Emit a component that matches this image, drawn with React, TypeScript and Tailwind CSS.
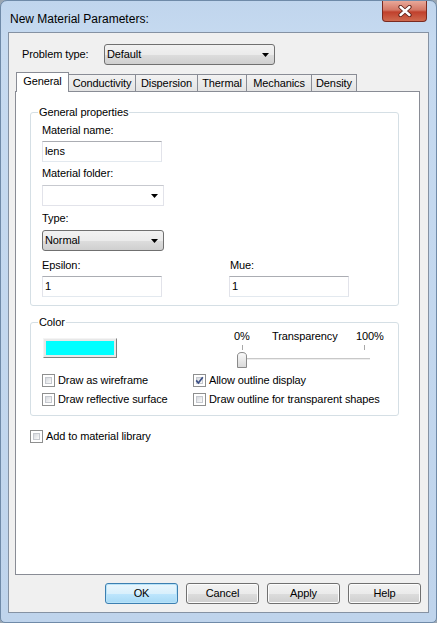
import React from "react";

// Win7 style "New Material Parameters" dialog

const font = "font-['Liberation_Sans',Arial,sans-serif]";

function Arrow() {
  return (
    <svg width="7" height="4" viewBox="0 0 7 4">
      <path d="M0 0h7L3.5 4z" fill="#000" />
    </svg>
  );
}

function Combo({ value, className }: { value: string; className: string }) {
  return (
    <div
      className={`flex h-[21px] items-center justify-between rounded-[3px] border border-[#707070] bg-[linear-gradient(#f2f2f2_0%,#ebebeb_50%,#dddddd_51%,#cfcfcf_100%)] pl-[2px] pr-[5px] ${className}`}
    >
      <span>{value}</span>
      <Arrow />
    </div>
  );
}

function TextBox({ value, className }: { value: string; className: string }) {
  return (
    <div
      className={`flex h-[21px] items-center border border-x-[#e2e3ea] border-t-[#abadb3] border-b-[#e3e9ef] bg-white pl-[2px] ${className}`}
    >
      {value}
    </div>
  );
}

function Check({ checked = false }: { checked?: boolean }) {
  return (
    <span className="relative flex h-[13px] w-[13px] shrink-0 border border-[#8e8f8f] bg-white p-[2px]">
      <span className="h-full w-full border border-[#c6c9cf] bg-[linear-gradient(135deg,#d6d9de,#fbfbfb)]" />
      {checked && (
        <svg className="absolute left-0 top-0" width="11" height="11" viewBox="0 0 11 11">
          <path d="M2.2 5.4 L4.4 8 L8.8 2.2" fill="none" stroke="#3b4f86" strokeWidth="1.7" />
        </svg>
      )}
    </span>
  );
}

function CheckRow({ label, checked }: { label: string; checked?: boolean }) {
  return (
    <div className="flex h-[13px] items-center gap-[3px]">
      <Check checked={checked} />
      <span className="leading-[13px]">{label}</span>
    </div>
  );
}

function Button({ label, primary }: { label: string; primary?: boolean }) {
  return (
    <div
      className={
        primary
          ? "flex h-[21px] w-[73px] items-center justify-center rounded-[3px] border border-[#3c7fb1] bg-[linear-gradient(#eaf6fd_0%,#d9f0fc_50%,#bee6fd_51%,#a7d9f5_100%)] shadow-[inset_0_0_0_1px_#b9e3f8]"
          : "flex h-[21px] w-[73px] items-center justify-center rounded-[3px] border border-[#707070] bg-[linear-gradient(#f2f2f2_0%,#ebebeb_50%,#dddddd_51%,#cfcfcf_100%)] shadow-[inset_0_0_0_1px_#fcfcfc]"
      }
    >
      {label}
    </div>
  );
}

const tabs = [
  { label: "Conductivity", w: "w-[68px]" },
  { label: "Dispersion", w: "w-[63px]" },
  { label: "Thermal", w: "w-[50px]" },
  { label: "Mechanics", w: "w-[66px]" },
  { label: "Density", w: "w-[46px]" },
];

export default function App() {
  return (
    <div className={`h-[623px] w-[437px] bg-[#9aa6b2] text-[11px] tracking-[-0.1px] text-black ${font}`}>
      <div className="flex h-[623px] w-[437px] flex-col rounded-t-[7px] rounded-b-[5px] border border-[#6f8aa8] bg-[linear-gradient(180deg,#c0d5ed_0%,#c6daf0_6%,#bfd4ec_100%)]">
        {/* title bar */}
        <div className="flex h-[31px] items-start justify-between">
          <span className="ml-[9px] mt-[11px] text-[12px] leading-[15px] tracking-normal">New Material Parameters:</span>
          <div className="mr-[9px] flex h-[21px] w-[45px] items-center justify-center rounded-b-[4px] border border-t-0 border-[#7a2a20] bg-[linear-gradient(#e9a899_0%,#d47866_45%,#c0402c_55%,#cf6a4f_100%)]">
            <svg width="16" height="12" viewBox="0 0 16 12">
              <path d="M3.5 2 L12.5 10 M12.5 2 L3.5 10" stroke="#5b2118" strokeWidth="4.2" strokeLinecap="round" />
              <path d="M3.5 2 L12.5 10 M12.5 2 L3.5 10" stroke="#fff" strokeWidth="2.4" strokeLinecap="round" />
            </svg>
          </div>
        </div>

        {/* client area */}
        <div className="mx-[7px] flex h-[581px] flex-col border border-[#8592a3] bg-[#f0f0f0]">
          <div className="mt-[11px] flex h-[21px] items-center">
            <span className="w-[95px] pl-[13px]">Problem type:</span>
            <Combo value="Default" className="w-[171px]" />
          </div>

          {/* tabs */}
          <div className="relative z-10 ml-[7px] mt-[7px] flex h-[19px] items-end">
            <div className="-mb-px flex h-[20px] w-[53px] items-center justify-center border-x border-t border-[#898c95] bg-white pb-[2px]">
              General
            </div>
            {tabs.map((t) => (
              <div
                key={t.label}
                className={`-ml-px flex h-[17px] ${t.w} items-center justify-center border-x border-t border-[#898c95] bg-[linear-gradient(#f2f2f2,#e3e3e3)]`}
              >
                {t.label}
              </div>
            ))}
          </div>

          {/* tab panel */}
          <div className="ml-[6px] flex h-[484px] w-[405px] flex-col border border-[#898c95] bg-white">
            {/* general properties */}
            <div className="relative ml-[14px] mt-[20px] flex h-[194px] w-[369px] flex-col rounded-[3px] border border-[#d5dfe5] pl-[11px]">
              <span className="absolute -top-[7px] left-[7px] bg-white px-[1px] leading-[13px]">General properties</span>
              <span className="mt-[11px] leading-[13px]">Material name:</span>
              <TextBox value="lens" className="mt-[4px] w-[120px]" />
              <span className="mt-[5px] leading-[13px]">Material folder:</span>
              <div className="mt-[5px] flex h-[21px] w-[122px] items-center justify-end border border-[#e2e3ea] border-t-[#c7c9cf] bg-white pr-[5px]">
                <Arrow />
              </div>
              <span className="mt-[6px] leading-[13px]">Type:</span>
              <Combo value="Normal" className="mt-[5px] w-[122px]" />
              <div className="mt-[8px] flex">
                <div className="flex w-[187px] flex-col">
                  <span className="leading-[13px]">Epsilon:</span>
                  <TextBox value="1" className="mt-[4px] w-[120px]" />
                </div>
                <div className="flex flex-col">
                  <span className="pl-px leading-[13px]">Mue:</span>
                  <TextBox value="1" className="mt-[4px] w-[120px]" />
                </div>
              </div>
            </div>

            {/* color */}
            <div className="relative ml-[14px] mt-[16px] flex h-[94px] w-[369px] flex-col rounded-[3px] border border-[#d5dfe5]">
              <span className="absolute -top-[7px] left-[7px] bg-white px-[1px] leading-[13px]">Color</span>
              <div className="flex h-[48px]">
                <div className="ml-[12px] mt-[15px] h-[20px] w-[74px] border border-t-[#f4f4f4] border-l-[#f4f4f4] border-r-[#808080] border-b-[#808080] bg-[#e8e8e8] p-[2px]">
                  <div className="h-full w-full bg-[#00ffff]" />
                </div>
                <div className="ml-[117px] flex flex-col">
                  <div className="mt-[7px] flex leading-[13px]">
                    <span className="w-[38px]">0%</span>
                    <span className="w-[84px]">Transparency</span>
                    <span>100%</span>
                  </div>
                  <svg width="140" height="26" viewBox="0 0 140 26">
                    <defs>
                      <linearGradient id="thumb" x1="0" y1="0" x2="0" y2="1">
                        <stop offset="0" stopColor="#fbfbfb" />
                        <stop offset="1" stopColor="#d8d8d8" />
                      </linearGradient>
                    </defs>
                    <rect x="8" y="2" width="1" height="5" fill="#a8a8a8" />
                    <rect x="130" y="2" width="1" height="5" fill="#a8a8a8" />
                    <rect x="8" y="15" width="128" height="1" fill="#c8c8c8" />
                    <rect x="8" y="16" width="128" height="1" fill="#eeeeee" />
                    <path
                      d="M3.5 13 Q3.5 9.5 8 9.5 Q12.5 9.5 12.5 13 V24.5 H3.5 Z"
                      fill="url(#thumb)"
                      stroke="#8a8a8a"
                    />
                  </svg>
                </div>
              </div>
              <div className="mt-[3px] grid grid-cols-[151px_1fr] gap-y-[6px] pl-[11px]">
                <CheckRow label="Draw as wireframe" />
                <CheckRow label="Allow outline display" checked />
                <CheckRow label="Draw reflective surface" />
                <CheckRow label="Draw outline for transparent shapes" />
              </div>
            </div>

            <div className="ml-[14px] mt-[14px]">
              <CheckRow label="Add to material library" />
            </div>
          </div>

          {/* buttons */}
          <div className="mt-[8px] flex justify-end gap-[8px] pr-[7px]">
            <Button label="OK" primary />
            <Button label="Cancel" />
            <Button label="Apply" />
            <Button label="Help" />
          </div>
        </div>
      </div>
    </div>
  );
}
